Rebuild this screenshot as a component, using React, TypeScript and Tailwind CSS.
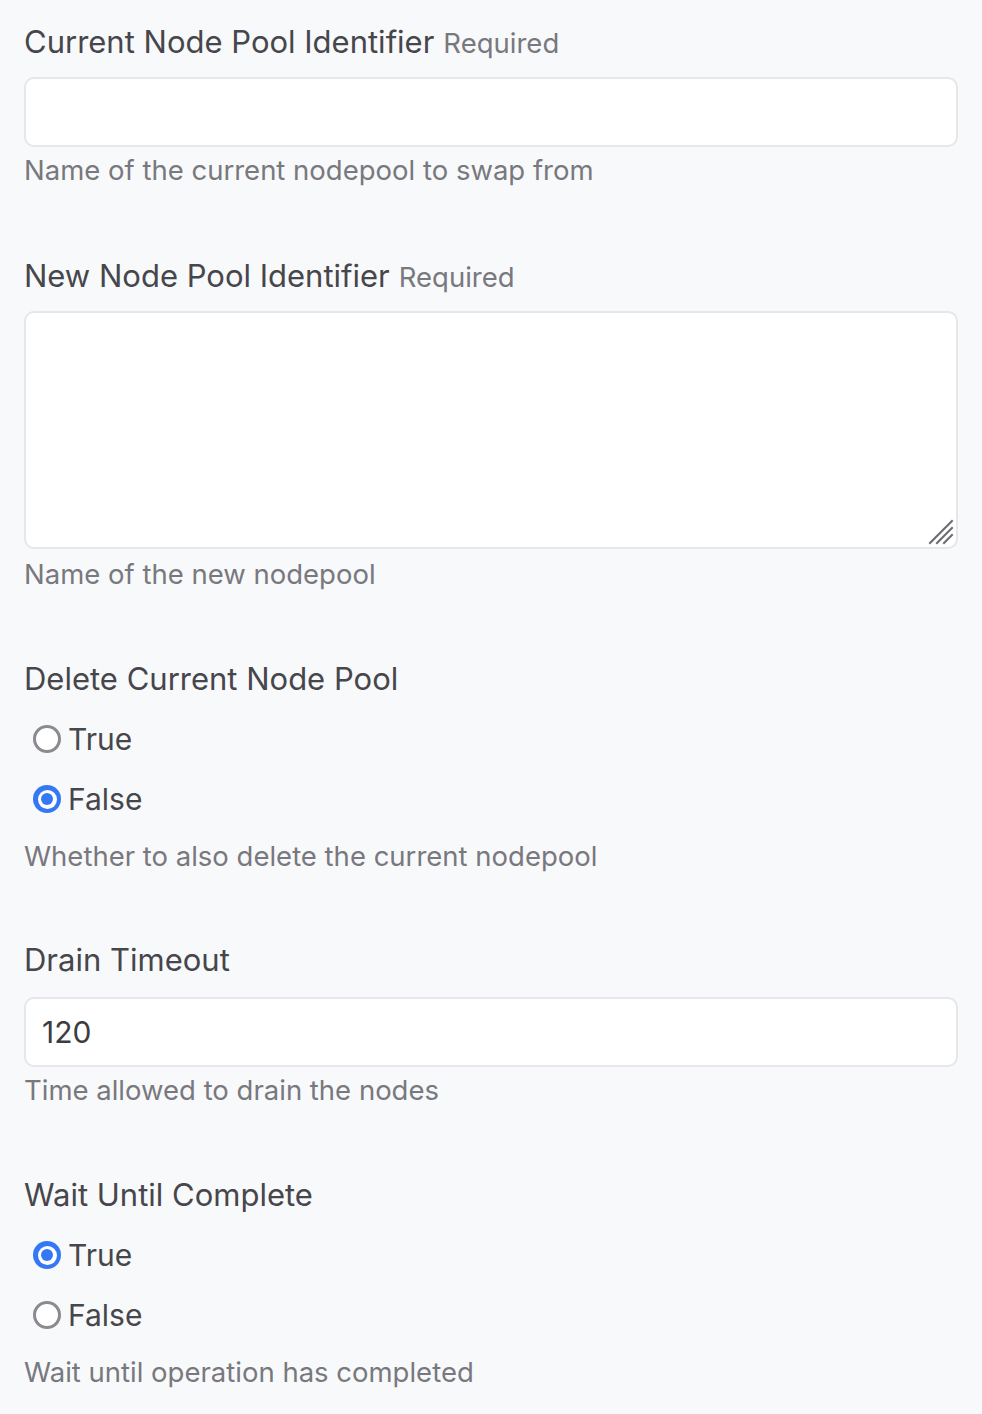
import React from "react";

const font = { fontFamily: "Inter, 'Noto Sans', 'Liberation Sans', sans-serif" };

function Label({ text, required }: { text: string; required?: boolean }) {
  return (
    <div className="h-[36px] leading-[36px] text-[31px] text-[#46464b] whitespace-nowrap">
      {text}
      {required && <span className="ml-[9px] text-[27.5px] text-[#78787e]">Required</span>}
    </div>
  );
}

function Help({ text, mt }: { text: string; mt: string }) {
  return <div className={`${mt} h-[32px] leading-[32px] text-[27.5px] text-[#78787e] whitespace-nowrap`}>{text}</div>;
}

function Radio({ checked, label }: { checked: boolean; label: string }) {
  return (
    <div className="flex items-center h-[40px] pl-[9px]">
      {checked ? (
        <span className="w-[28px] h-[28px] rounded-full bg-[#3478f6] flex items-center justify-center">
          <span className="w-[19px] h-[19px] rounded-full bg-white flex items-center justify-center">
            <span className="w-[12px] h-[12px] rounded-full bg-[#3478f6]" />
          </span>
        </span>
      ) : (
        <span className="w-[28px] h-[28px] rounded-full border-[3.5px] border-[#8a8a90] bg-white" />
      )}
      <span className="ml-[7px] text-[30px] text-[#46464b]">{label}</span>
    </div>
  );
}

export default function App() {
  return (
    <div className="min-h-[1414px] bg-[#f8f9fb] px-[24px] pt-[24px]" style={font}>
      <div className="flex flex-col w-[934px]">
        <Label text="Current Node Pool Identifier" required />
        <input className="mt-[17px] h-[70px] w-full rounded-[10px] border-2 border-[#e6e6eb] bg-white px-[16px] text-[30px] outline-none" />
        <Help text="Name of the current nodepool to swap from" mt="mt-[7px]" />

        <div className="mt-[72px]">
          <Label text="New Node Pool Identifier" required />
        </div>
        <div className="relative mt-[17px] h-[238px]">
          <textarea className="h-full w-full resize-none rounded-[10px] border-2 border-[#e6e6eb] bg-white px-[16px] text-[30px] outline-none block" />
          <svg className="absolute right-[3px] bottom-[3px]" width="28" height="28" viewBox="0 0 28 28">
            <g stroke="#6b6b70" strokeWidth="2" strokeLinecap="square">
              <line x1="3" y1="25" x2="25" y2="3" />
              <line x1="10" y1="25" x2="25" y2="10" />
              <line x1="17" y1="25" x2="25" y2="17" />
            </g>
          </svg>
        </div>
        <Help text="Name of the new nodepool" mt="mt-[9px]" />

        <div className="mt-[71px]">
          <Label text="Delete Current Node Pool" />
        </div>
        <div className="mt-[22px] flex flex-col gap-[20px]">
          <Radio checked={false} label="True" />
          <Radio checked={true} label="False" />
        </div>
        <Help text="Whether to also delete the current nodepool" mt="mt-[21px]" />

        <div className="mt-[70px]">
          <Label text="Drain Timeout" />
        </div>
        <input
          defaultValue="120"
          className="mt-[19px] h-[70px] w-full rounded-[10px] border-2 border-[#e6e6eb] bg-white px-[16px] text-[30px] text-[#3c3c41] outline-none"
        />
        <Help text="Time allowed to drain the nodes" mt="mt-[7px]" />

        <div className="mt-[71px]">
          <Label text="Wait Until Complete" />
        </div>
        <div className="mt-[22px] flex flex-col gap-[20px]">
          <Radio checked={true} label="True" />
          <Radio checked={false} label="False" />
        </div>
        <Help text="Wait until operation has completed" mt="mt-[21px]" />
      </div>
    </div>
  );
}
